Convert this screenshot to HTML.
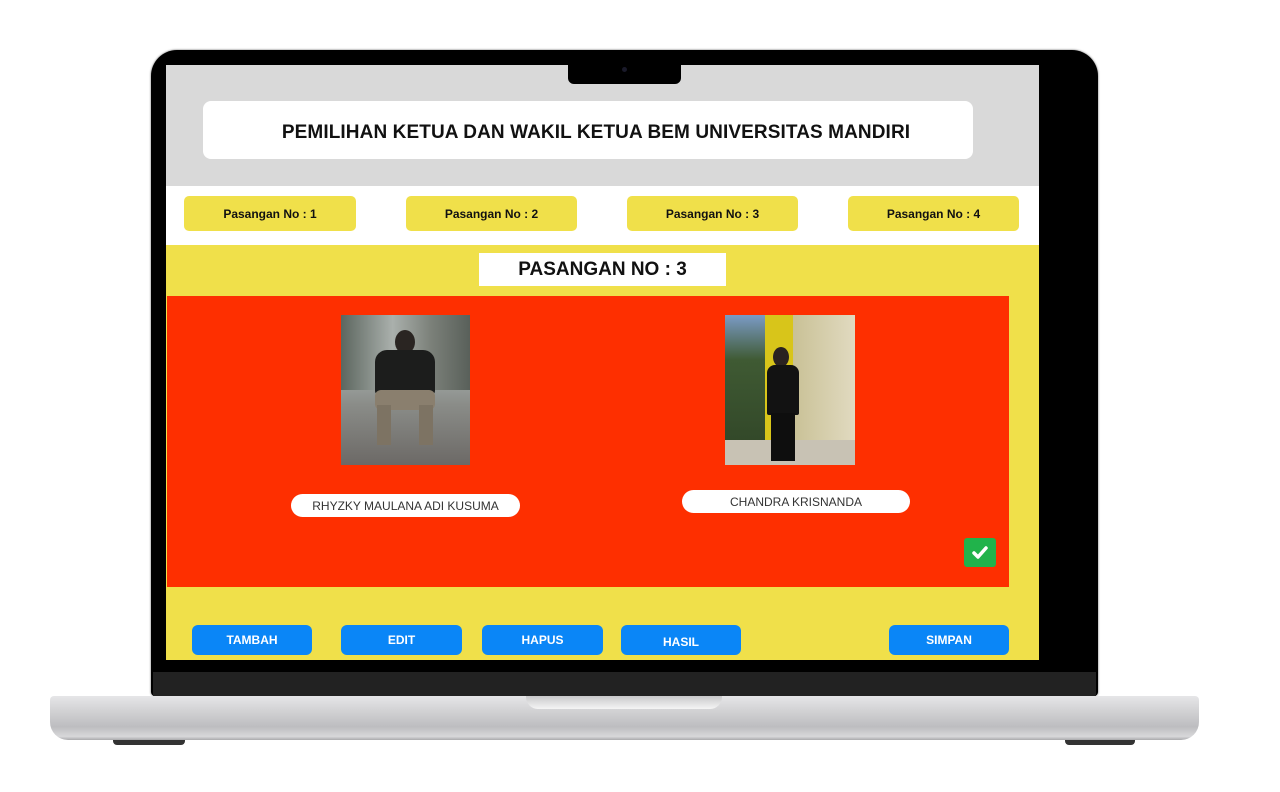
<!DOCTYPE html>
<html><head><meta charset="utf-8"><style>
*{margin:0;padding:0;box-sizing:border-box}
body{width:1280px;height:792px;background:#fff;position:relative;overflow:hidden;font-family:"Liberation Sans",Arial,sans-serif}
.a{position:absolute}
.btn{position:absolute;background:#0a86f7;color:#fff;font-size:12px;font-weight:bold;border-radius:6px;display:flex;align-items:center;justify-content:center}
.pas{position:absolute;background:#f0e04a;border-radius:5px;font-size:12px;font-weight:bold;display:flex;align-items:center;justify-content:center;color:#111}
.nm{position:absolute;background:#fff;border-radius:12px;font-size:12px;color:#333;display:flex;align-items:center;justify-content:center}
</style></head><body>
<div class="a" style="left:151px;top:50px;width:947px;height:646px;background:#000;border-radius:26px 26px 4px 4px;box-shadow:0 0 2px #666"></div>
<div class="a" style="left:153px;top:672px;width:943px;height:24px;background:#222"></div>
<div class="a" style="left:50px;top:696px;width:1149px;height:44px;border-radius:4px 4px 18px 18px;background:linear-gradient(#e6e6e8 0%,#d4d4d6 30%,#bdbdc0 70%,#d8d8da 92%,#a9a9ac 100%)"></div>
<div class="a" style="left:526px;top:696px;width:196px;height:13px;border-radius:0 0 12px 12px;background:linear-gradient(#c9c9cb,#f5f5f5)"></div>
<div class="a" style="left:113px;top:740px;width:72px;height:5px;background:#333;border-radius:0 0 4px 4px"></div>
<div class="a" style="left:1065px;top:740px;width:70px;height:5px;background:#333;border-radius:0 0 4px 4px"></div>
<div class="a" style="left:166px;top:65px;width:873px;height:595px;background:#f0e04a;overflow:hidden">
  <div class="a" style="left:0;top:0;width:873px;height:121px;background:#d9d9d9"></div>
  <div class="a" style="left:0;top:121px;width:873px;height:59px;background:#fff"></div>
  <div class="a" style="left:37px;top:36px;width:770px;height:58px;background:#fff;border-radius:8px;display:flex;align-items:center;justify-content:center;font-size:19px;font-weight:bold;color:#111;letter-spacing:0.1px;padding-left:16px;padding-top:5px">PEMILIHAN KETUA DAN WAKIL KETUA BEM UNIVERSITAS MANDIRI</div>
  <div class="pas" style="left:18px;top:131px;width:172px;height:35px">Pasangan No : 1</div>
  <div class="pas" style="left:240px;top:131px;width:171px;height:35px">Pasangan No : 2</div>
  <div class="pas" style="left:461px;top:131px;width:171px;height:35px">Pasangan No : 3</div>
  <div class="pas" style="left:682px;top:131px;width:171px;height:35px">Pasangan No : 4</div>
  <div class="a" style="left:313px;top:188px;width:247px;height:33px;background:#fff;display:flex;align-items:center;justify-content:center;font-size:19px;font-weight:bold;color:#111">PASANGAN NO : 3</div>
  <div class="a" style="left:1px;top:231px;width:842px;height:291px;background:#fe2f00"></div>
  <div class="a" style="left:175px;top:250px;width:129px;height:150px;background:linear-gradient(#6f7570 0%,#9aa09d 45%,#8a8c88 60%,#6c6966 100%);overflow:hidden">
    <div class="a" style="left:0;top:0;width:129px;height:75px;background:linear-gradient(90deg,#5c665f,#aab0ac 40%,#7b8079 70%,#59605a)"></div>
    <div class="a" style="left:54px;top:15px;width:20px;height:24px;background:#2a2522;border-radius:50%"></div>
    <div class="a" style="left:34px;top:35px;width:60px;height:45px;background:#1c1d1c;border-radius:12px 12px 4px 4px"></div>
    <div class="a" style="left:34px;top:75px;width:60px;height:20px;background:#8a7f6e;border-radius:6px"></div>
    <div class="a" style="left:36px;top:90px;width:14px;height:40px;background:#7d7363"></div>
    <div class="a" style="left:78px;top:90px;width:14px;height:40px;background:#7d7363"></div>
  </div>
  <div class="a" style="left:559px;top:250px;width:130px;height:150px;background:#d2c9a8;overflow:hidden">
    <div class="a" style="left:0;top:0;width:40px;height:150px;background:linear-gradient(#7b9bc6,#3f5a33 30%,#2f4326 100%)"></div>
    <div class="a" style="left:40px;top:0;width:28px;height:150px;background:#d8c51a"></div>
    <div class="a" style="left:68px;top:0;width:62px;height:150px;background:linear-gradient(90deg,#c9c196,#e1dac0)"></div>
    <div class="a" style="left:0;top:125px;width:130px;height:25px;background:#c8c2b4"></div>
    <div class="a" style="left:48px;top:32px;width:16px;height:20px;background:#2a2220;border-radius:50%"></div>
    <div class="a" style="left:42px;top:50px;width:32px;height:50px;background:#121212;border-radius:8px 8px 2px 2px"></div>
    <div class="a" style="left:46px;top:98px;width:24px;height:48px;background:#0e0e0e"></div>
  </div>
  <div class="nm" style="left:125px;top:429px;width:229px;height:23px">RHYZKY MAULANA ADI KUSUMA</div>
  <div class="nm" style="left:516px;top:425px;width:228px;height:23px">CHANDRA KRISNANDA</div>
  <div class="a" style="left:798px;top:473px;width:32px;height:29px;background:#21b34b;border-radius:3px">
    <svg width="32" height="29" viewBox="0 0 32 29"><path d="M10 15 L14 19 L22 10" stroke="#fff" stroke-width="3.5" fill="none" stroke-linecap="round" stroke-linejoin="round"/></svg>
  </div>
  <div class="btn" style="left:26px;top:560px;width:120px;height:30px">TAMBAH</div>
  <div class="btn" style="left:175px;top:560px;width:121px;height:30px">EDIT</div>
  <div class="btn" style="left:316px;top:560px;width:121px;height:30px">HAPUS</div>
  <div class="btn" style="left:455px;top:560px;width:120px;height:30px;padding-top:4px">HASIL</div>
  <div class="btn" style="left:723px;top:560px;width:120px;height:30px">SIMPAN</div>
</div>
<div class="a" style="left:568px;top:65px;width:113px;height:19px;background:#000;border-radius:0 0 6px 6px"></div>
<div class="a" style="left:622px;top:67px;width:5px;height:5px;background:#1a1a2a;border-radius:50%"></div>
</body></html>
